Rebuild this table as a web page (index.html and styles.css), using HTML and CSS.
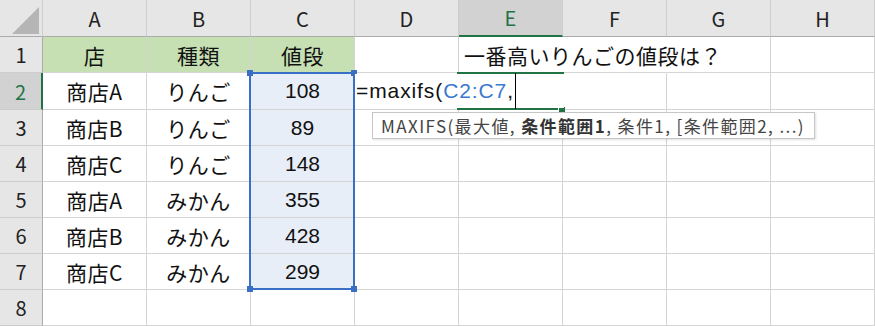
FILE: index.html
```html
<!DOCTYPE html>
<html lang="ja">
<head>
  <meta charset="UTF-8">
  <title>MAXIFS</title>
  <link rel="stylesheet" href="styles.css">
</head>
<body>
  <div class="sheet">
    <!-- 列見出し -->
    <div class="head corner"><span class="tri"></span></div>
    <div class="head">A</div>
    <div class="head">B</div>
    <div class="head">C</div>
    <div class="head">D</div>
    <div class="head sel-col">E</div>
    <div class="head">F</div>
    <div class="head">G</div>
    <div class="head">H</div>

    <div class="rh">1</div>
    <div class="cell title">店</div>
    <div class="cell title">種類</div>
    <div class="cell title">値段</div>
    <div class="cell"></div>
    <div class="cell left nob">一番高いりんごの値段は？</div>
    <div class="cell nob"></div>
    <div class="cell"></div>
    <div class="cell"></div>

    <div class="rh sel-row">2</div>
    <div class="cell">商店A</div>
    <div class="cell">りんご</div>
    <div class="cell range">108</div>
    <div class="cell"></div>
    <div class="cell"></div>
    <div class="cell"></div>
    <div class="cell"></div>
    <div class="cell"></div>

    <div class="rh">3</div>
    <div class="cell">商店B</div>
    <div class="cell">りんご</div>
    <div class="cell range">89</div>
    <div class="cell"></div>
    <div class="cell"></div>
    <div class="cell"></div>
    <div class="cell"></div>
    <div class="cell"></div>

    <div class="rh">4</div>
    <div class="cell">商店C</div>
    <div class="cell">りんご</div>
    <div class="cell range">148</div>
    <div class="cell"></div>
    <div class="cell"></div>
    <div class="cell"></div>
    <div class="cell"></div>
    <div class="cell"></div>

    <div class="rh">5</div>
    <div class="cell">商店A</div>
    <div class="cell">みかん</div>
    <div class="cell range">355</div>
    <div class="cell"></div>
    <div class="cell"></div>
    <div class="cell"></div>
    <div class="cell"></div>
    <div class="cell"></div>

    <div class="rh">6</div>
    <div class="cell">商店B</div>
    <div class="cell">みかん</div>
    <div class="cell range">428</div>
    <div class="cell"></div>
    <div class="cell"></div>
    <div class="cell"></div>
    <div class="cell"></div>
    <div class="cell"></div>

    <div class="rh">7</div>
    <div class="cell">商店C</div>
    <div class="cell">みかん</div>
    <div class="cell range">299</div>
    <div class="cell"></div>
    <div class="cell"></div>
    <div class="cell"></div>
    <div class="cell"></div>
    <div class="cell"></div>

    <div class="rh">8</div>
    <div class="cell"></div>
    <div class="cell"></div>
    <div class="cell"></div>
    <div class="cell"></div>
    <div class="cell"></div>
    <div class="cell"></div>
    <div class="cell"></div>
    <div class="cell"></div>

    <!-- 参照範囲 C2:C7 の枠 -->
    <div class="ref-box">
      <span class="knob tl"></span><span class="knob tr"></span>
      <span class="knob bl"></span><span class="knob br"></span>
    </div>

    <!-- 編集中のセル E2 -->
    <div class="active"><span class="fill-handle"></span></div>
    <div class="editor"><span>=maxifs(<span class="ref">C2:C7</span>,</span><span class="caret"></span></div>

    <div class="tip"><span>MAXIFS(最大値, <b>条件範囲1</b>, 条件1, [条件範囲2, ...)</span></div>
  </div>
</body>
</html>
```

FILE: styles.css
```css
body {
  margin: 0;
  background: #fff;
  font-family: "Noto Sans CJK JP", "Liberation Sans", sans-serif;
}

.sheet {
  position: relative;
  display: grid;
  grid-template-columns: 43px repeat(8, 104px);
  grid-template-rows: 37px 36px 37px repeat(6, 36px);
  width: 875px;
  overflow: hidden;
}

.head,
.rh {
  display: flex;
  align-items: center;
  justify-content: center;
  background: #e6e6e6;
  color: #222;
  font-size: 20px;
  box-sizing: border-box;
}

.head {
  border-right: 1px solid #cdcdcd;
  border-bottom: 1px solid #ababab;
}

.rh {
  border-right: 1px solid #ababab;
  border-bottom: 1px solid #cdcdcd;
}

.corner {
  position: relative;
}

.tri {
  position: absolute;
  right: 3px;
  bottom: 2px;
  width: 0;
  height: 0;
  border-left: 27px solid transparent;
  border-bottom: 27px solid #b5b5b5;
}

.sel-col {
  background: #d2d2d2;
  color: #217346;
  border-bottom: 2px solid #217346;
}

.sel-row {
  background: #d2d2d2;
  color: #217346;
  border-right: 2px solid #217346;
}

.cell {
  display: flex;
  align-items: center;
  justify-content: center;
  white-space: nowrap;
  font-size: 21px;
  letter-spacing: 0.5px;
  color: #111;
  border-right: 1px solid #d4d4d4;
  border-bottom: 1px solid #d4d4d4;
  box-sizing: border-box;
}

.cell.title {
  background: #c6e0b4;
}

.cell.range {
  background: #e8eef8;
  font-family: "Liberation Sans", sans-serif;
  letter-spacing: 0;
}

.cell.left {
  justify-content: flex-start;
  padding-left: 5px;
}

.cell.nob {
  border-right-color: transparent;
}

.ref-box {
  position: absolute;
  left: 249px;
  top: 72px;
  width: 106px;
  height: 218px;
  border: 2px solid #3a6fc6;
  box-sizing: border-box;
}

.knob {
  position: absolute;
  width: 6px;
  height: 6px;
  background: #3a6fc6;
}

.knob.tl { left: -4px; top: -4px; }
.knob.tr { right: -4px; top: -4px; }
.knob.bl { left: -4px; bottom: -4px; }
.knob.br { right: -4px; bottom: -4px; }

.active {
  position: absolute;
  left: 457px;
  top: 72px;
  width: 107px;
  height: 38px;
  border-top: 2px solid #217346;
  border-bottom: 2px solid #217346;
  box-sizing: border-box;
}

.fill-handle {
  position: absolute;
  right: -1px;
  bottom: -4px;
  width: 6px;
  height: 5px;
  background: #217346;
  border-left: 1px solid #fff;
}

.editor {
  position: absolute;
  left: 355px;
  top: 74px;
  width: 209px;
  height: 34px;
  display: flex;
  align-items: center;
  background: #fff;
  font-family: "Liberation Sans", sans-serif;
  font-size: 21px;
  letter-spacing: 0.9px;
  color: #111;
  white-space: nowrap;
  padding-left: 1px;
  box-sizing: border-box;
}

.editor .ref {
  color: #3a78d0;
}

.caret {
  display: inline-block;
  width: 1px;
  height: 36px;
  margin-left: 1px;
  background: #000;
}

.tip {
  position: absolute;
  left: 372px;
  top: 112px;
  width: 443px;
  height: 27px;
  display: flex;
  align-items: center;
  padding-left: 8px;
  box-sizing: border-box;
  background: #fff;
  border: 1px solid #c6c6c6;
  box-shadow: 1px 1px 2px rgba(0, 0, 0, 0.12);
  font-size: 17px;
  letter-spacing: 1.4px;
  color: #444;
  white-space: nowrap;
}

.tip b {
  font-weight: bold;
  color: #333;
}
```
